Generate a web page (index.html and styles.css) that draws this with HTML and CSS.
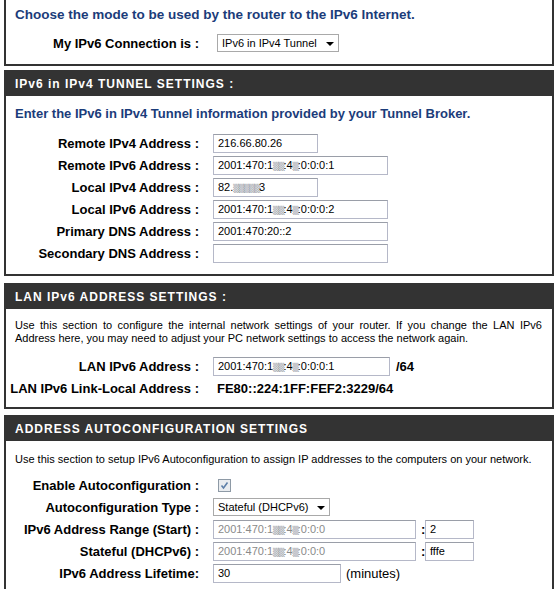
FILE: index.html
```html
<!DOCTYPE html>
<html>
<head>
<meta charset="utf-8">
<link rel="stylesheet" href="styles.css">
</head>
<body>
<div class="page">
  <section class="box box-first">
    <p class="lead">Choose the mode to be used by the router to the IPv6 Internet.</p>
    <div class="row row-conn">
      <span class="lbl">My IPv6 Connection is :</span>
      <div class="select sel-conn">IPv6 in IPv4 Tunnel<span class="arrow"></span></div>
    </div>
  </section>

  <section class="box">
    <h2 class="hdr">IPv6 in IPv4 TUNNEL SETTINGS :</h2>
    <div class="body body-tunnel">
      <p class="lead lead-tunnel">Enter the IPv6 in IPv4 Tunnel information provided by your Tunnel Broker.</p>
      <div class="rows">
        <div class="row"><span class="lbl">Remote IPv4 Address :</span><div class="inp w-short">216.66.80.26</div></div>
        <div class="row"><span class="lbl">Remote IPv6 Address :</span><div class="inp w-long">2001:470:1<span class="nz">▒▒</span>:4<span class="nz">▒</span>:0:0:0:1</div></div>
        <div class="row"><span class="lbl">Local IPv4 Address :</span><div class="inp w-short">82.<span class="nz">▒▒▒▒▒</span>3</div></div>
        <div class="row"><span class="lbl">Local IPv6 Address :</span><div class="inp w-long">2001:470:1<span class="nz">▒▒</span>:4<span class="nz">▒</span>:0:0:0:2</div></div>
        <div class="row"><span class="lbl">Primary DNS Address :</span><div class="inp w-long">2001:470:20::2</div></div>
        <div class="row"><span class="lbl">Secondary DNS Address :</span><div class="inp w-long"></div></div>
      </div>
    </div>
  </section>

  <section class="box box-lan">
    <h2 class="hdr">LAN IPv6 ADDRESS SETTINGS :</h2>
    <div class="body body-lan">
      <p class="desc desc-just">Use this section to configure the internal network settings of your router. If you change the LAN IPv6 Address here, you may need to adjust your PC network settings to access the network again.</p>
      <div class="rows">
        <div class="row"><span class="lbl">LAN IPv6 Address :</span><div class="inp w-lan">2001:470:1<span class="nz">▒▒</span>:4<span class="nz">▒</span>:0:0:0:1</div><span class="suffix">/64</span></div>
        <div class="row"><span class="lbl">LAN IPv6 Link-Local Address :</span><span class="val">FE80::224:1FF:FEF2:3229/64</span></div>
      </div>
    </div>
  </section>

  <section class="box box-auto">
    <h2 class="hdr">ADDRESS AUTOCONFIGURATION SETTINGS</h2>
    <div class="body body-auto">
      <p class="desc">Use this section to setup IPv6 Autoconfiguration to assign IP addresses to the computers on your network.</p>
      <div class="rows rows-auto">
        <div class="row"><span class="lbl">Enable Autoconfiguration :</span>
          <span class="chk"><svg width="13" height="13" viewBox="0 0 13 13"><rect x="0.5" y="0.5" width="12" height="12" fill="#e9ecef" stroke="#8e9aa6"/><path d="M3.5 6.5 L5.5 9 L9.5 3.5" fill="none" stroke="#5d7fa8" stroke-width="1.6"/></svg></span>
        </div>
        <div class="row"><span class="lbl">Autoconfiguration Type :</span><div class="select sel-type">Stateful (DHCPv6)<span class="arrow"></span></div></div>
        <div class="row"><span class="lbl">IPv6 Address Range (Start) :</span><div class="inp w-range dis">2001:470:1<span class="nz">▒▒</span>:4<span class="nz">▒</span>:0:0:0</div><span class="colon">:</span><div class="inp w-small">2</div></div>
        <div class="row"><span class="lbl">Stateful (DHCPv6) :</span><div class="inp w-range dis">2001:470:1<span class="nz">▒▒</span>:4<span class="nz">▒</span>:0:0:0</div><span class="colon">:</span><div class="inp w-small">fffe</div></div>
        <div class="row"><span class="lbl">IPv6 Address Lifetime:</span><div class="inp w-life">30</div><span class="unit">(minutes)</span></div>
      </div>
    </div>
  </section>
</div>
</body>
</html>
```

FILE: styles.css
```css
* { box-sizing: border-box; }
html, body { margin: 0; padding: 0; background: #fff; }
body {
  font-family: "Liberation Sans", Arial, sans-serif;
  font-size: 11px;
  color: #000;
}
.page {
  padding: 0 4px;
  width: 558px;
  height: 589px;
  overflow: hidden;
}
.box {
  border: 2px solid #333;
  background: #fff;
  margin-top: 5px;
}
.box-first {
  border-top: none;
  margin-top: 0;
  padding: 7px 0 10px;
}
.box-first + .box { margin-top: 4px; }
.box-lan { margin-top: 7px; }
.box-auto { margin-top: 6px; }
.lead {
  margin: 0 0 0 9px;
  font-size: 13px;
  line-height: 16px;
  font-weight: bold;
  color: #1b3c7a;
}
.box-first .lead { font-size: 13.5px; }
.hdr {
  margin: 0;
  background: #333;
  color: #fff;
  font-size: 12px;
  line-height: 14px;
  font-weight: bold;
  letter-spacing: 1px;
  padding: 5px 9px 5px;
}
.body { padding: 0; }
.body-tunnel { padding: 10px 0 10px; }
.lead-tunnel { margin-bottom: 10px; }
.rows { display: flex; flex-direction: column; }
.row {
  display: flex;
  align-items: center;
  height: 22px;
}
.row-conn { margin-top: 9px; }
.lbl {
  width: 193px;
  text-align: right;
  font-size: 13px;
  font-weight: bold;
  white-space: nowrap;
  margin-right: 14px;
}
.inp {
  height: 19px;
  border: 1px solid #b5b8c8;
  border-top-color: #9a9ea8;
  background: #fff;
  padding: 0 4px;
  font-size: 11px;
  line-height: 17px;
  white-space: nowrap;
  overflow: hidden;
}
.inp.dis { color: #8a8a8a; }
.nz { color: #9aa0a8; letter-spacing: -1px; font-family: "DejaVu Sans", sans-serif; font-size: 8px; }
.w-short { width: 105px; }
.w-long { width: 175px; }
.w-lan { width: 177px; }
.w-range { width: 203px; }
.w-small { width: 49px; }
.w-life { width: 128px; }
.select {
  height: 18px;
  border: 1px solid #a9a9a9;
  background: #fff;
  font-size: 11px;
  line-height: 16px;
  padding: 0 0 0 4px;
  display: flex;
  align-items: center;
  white-space: nowrap;
}
.arrow {
  width: 0; height: 0;
  border-left: 4px solid transparent;
  border-right: 4px solid transparent;
  border-top: 4px solid #000;
  margin-left: 9px;
  margin-right: 4px;
  margin-top: 1px;
}
.sel-conn { margin-left: 4px; }
.desc {
  margin: 0 10px 0 9px;
  font-size: 11px;
  line-height: 13px;
}
.desc-just { text-align: justify; }
.body-lan { padding: 10px 0 8px; }
.body-lan .rows { margin-top: 10px; }
.suffix {
  font-size: 13px; font-weight: bold; margin-left: 6px;
}
.val {
  font-size: 13px; font-weight: bold; margin-left: 4px; white-space: nowrap;
}
.body-auto { padding: 12px 0 8px; }
.rows-auto { margin-top: 8px; }
.chk { display: inline-flex; margin-left: 5px; }
.colon { margin: 0 0 0 5px; font-size: 13px; font-weight: bold; width: 4px; }
.unit { font-size: 13px; margin-left: 5px; }
```
